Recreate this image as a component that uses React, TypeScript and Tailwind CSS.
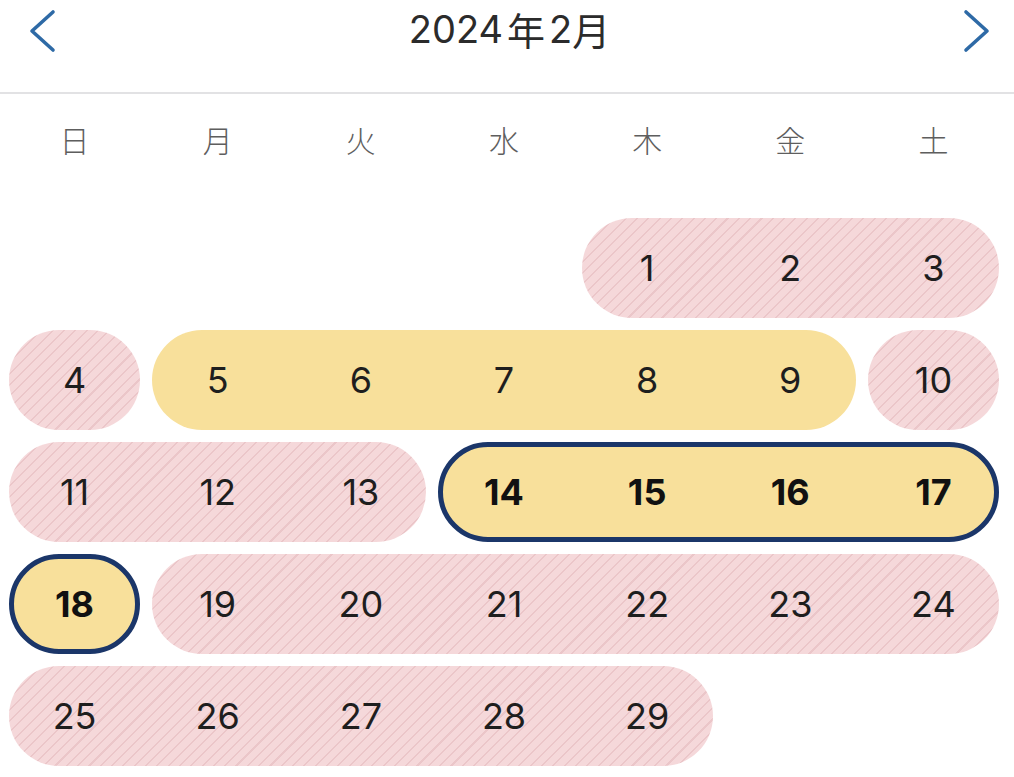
import React from "react";

type Seg = { start: number; days: number[]; kind: "pink" | "yellow" | "selected" };

const rows: Seg[][] = [
  [{ start: 5, days: [1, 2, 3], kind: "pink" }],
  [
    { start: 1, days: [4], kind: "pink" },
    { start: 2, days: [5, 6, 7, 8, 9], kind: "yellow" },
    { start: 7, days: [10], kind: "pink" },
  ],
  [
    { start: 1, days: [11, 12, 13], kind: "pink" },
    { start: 4, days: [14, 15, 16, 17], kind: "selected" },
  ],
  [
    { start: 1, days: [18], kind: "selected" },
    { start: 2, days: [19, 20, 21, 22, 23, 24], kind: "pink" },
  ],
  [{ start: 1, days: [25, 26, 27, 28, 29], kind: "pink" }],
];

const colStart: Record<number, string> = {
  1: "col-start-1",
  2: "col-start-2",
  3: "col-start-3",
  4: "col-start-4",
  5: "col-start-5",
  6: "col-start-6",
  7: "col-start-7",
};
const colSpan: Record<number, string> = {
  1: "col-span-1",
  2: "col-span-2",
  3: "col-span-3",
  4: "col-span-4",
  5: "col-span-5",
  6: "col-span-6",
  7: "col-span-7",
};
const gridCols: Record<number, string> = {
  1: "grid-cols-1",
  2: "grid-cols-2",
  3: "grid-cols-3",
  4: "grid-cols-4",
  5: "grid-cols-5",
  6: "grid-cols-6",
  7: "grid-cols-7",
};

const stripe =
  "bg-[repeating-linear-gradient(135deg,#f5d8da_0px,#f5d8da_6.5px,#ebc6c9_6.5px,#ebc6c9_8px)]";

function Pill({ seg }: { seg: Seg }) {
  const n = seg.days.length;
  const bg =
    seg.kind === "pink"
      ? stripe
      : seg.kind === "yellow"
      ? "bg-[#f8e09b]"
      : "bg-[#f8e09b] border-[5px] border-[#1b3669]";
  const inner = seg.kind === "selected" ? "-mx-[11px]" : "-mx-[6px]";
  const text =
    seg.kind === "selected"
      ? "font-bold text-[#111111]"
      : "font-normal text-[#1e1e1e]";
  return (
    <div
      className={`${colStart[seg.start]} ${colSpan[n]} mx-[6px] h-[100px] rounded-full flex items-center ${bg}`}
    >
      <div className={`grid ${gridCols[n]} ${inner} flex-1`}>
        {seg.days.map((d) => (
          <div
            key={d}
            className={`flex items-center justify-center text-[36px] leading-none ${text}`}
          >
            {d}
          </div>
        ))}
      </div>
    </div>
  );
}

export default function App() {
  const week = ["日", "月", "火", "水", "木", "金", "土"];
  return (
    <div className="w-[1014px] h-[777px] bg-white overflow-hidden font-[family-name:Inter,'Noto_Sans_CJK_JP',sans-serif]">
      <div className="h-[94px] border-b-[2px] border-[#e2e2e4]">
        <div className="flex items-center justify-between h-[62px] pl-[27px] pr-[22px]">
          <svg width="30" height="44" viewBox="0 0 30 44" fill="none">
            <path
              d="M26 3 L5 22 L26 41"
              stroke="#2e6aa6"
              strokeWidth="3.6"
              strokeLinecap="round"
              strokeLinejoin="round"
            />
          </svg>
          <div className="flex items-center mb-[4px] text-[38px] leading-none text-[#2b2b2b] font-normal">
            <span>2024</span>
            <span className="mx-[4px] font-[family-name:'Noto_Sans_CJK_JP',sans-serif]">年</span>
            <span>2</span>
            <span className="font-[family-name:'Noto_Sans_CJK_JP',sans-serif]">月</span>
          </div>
          <svg width="30" height="44" viewBox="0 0 30 44" fill="none">
            <path
              d="M4 3 L25 22 L4 41"
              stroke="#2e6aa6"
              strokeWidth="3.6"
              strokeLinecap="round"
              strokeLinejoin="round"
            />
          </svg>
        </div>
      </div>
      <div className="grid grid-cols-7 pl-[3px] pr-[9px] h-[98px] pb-[8px] items-center">
        {week.map((w) => (
          <div
            key={w}
            className="flex justify-center text-[30px] leading-none font-light text-[#5e5e5e] font-[family-name:'Noto_Sans_CJK_JP',sans-serif]"
          >
            {w}
          </div>
        ))}
      </div>
      <div className="flex flex-col gap-[12px] pt-[26px] pl-[3px] pr-[9px]">
        {rows.map((r, i) => (
          <div key={i} className="grid grid-cols-7">
            {r.map((s) => (
              <Pill key={s.days[0]} seg={s} />
            ))}
          </div>
        ))}
      </div>
    </div>
  );
}
